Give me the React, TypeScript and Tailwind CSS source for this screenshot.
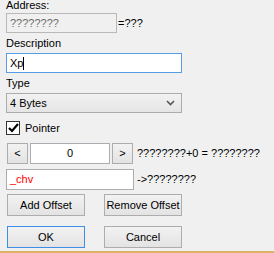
const font = "font-['Liberation_Sans',Arial,sans-serif] text-[11px]";

const Btn = ({ label, focused }: { label: string; focused?: boolean }) => (
  <button
    className={`w-[78px] h-[22px] border bg-gradient-to-b from-[#f2f2f2] to-[#e3e3e3] text-black leading-none ${
      focused ? "border-[#3d8ee6]" : "border-[#adadad]"
    }`}
  >
    {label}
  </button>
);

const Arrow = ({ label }: { label: string }) => (
  <button className="w-[21px] h-[21px] border border-[#adadad] bg-gradient-to-b from-[#f2f2f2] to-[#e3e3e3] text-black leading-none">
    {label}
  </button>
);

export default function App() {
  return (
    <div className={`w-[274px] h-[253px] bg-[#f0f0f0] overflow-hidden flex flex-col pl-[6px] text-black ${font}`}>
      {/* Address */}
      <div className="h-[13px] leading-[13px] mt-[-1px]">Address:</div>
      <div className="flex items-center mt-[1px]">
        <div className="w-[111px] h-[20px] border border-[#b9b9b9] bg-[#f0f0f0] text-[#6d6d6d] pl-[3px] leading-[18px]">
          ????????
        </div>
        <span className="ml-[1px]">=???</span>
      </div>

      {/* Description */}
      <div className="h-[13px] leading-[13px] mt-[4px]">Description</div>
      <div className="w-[176px] h-[20px] border border-[#569de5] bg-white mt-[3px] pl-[3px] leading-[18px] flex items-center">
        Xp<span className="inline-block w-px h-[13px] bg-black"></span>
      </div>

      {/* Type */}
      <div className="h-[13px] leading-[13px] mt-[4px]">Type</div>
      <div className="w-[176px] h-[20px] border border-[#acacac] bg-gradient-to-b from-[#f2f2f2] to-[#e5e5e5] mt-[3px] pl-[3px] flex items-center justify-between">
        <span>4 Bytes</span>
        <svg width="9" height="6" viewBox="0 0 9 6" className="mr-[6px]">
          <path d="M1 1 L4.5 4.5 L8 1" stroke="#555" strokeWidth="1.6" fill="none" />
        </svg>
      </div>

      {/* Pointer */}
      <div className="flex items-center mt-[8px] h-[14px]">
        <div className="w-[14px] h-[14px] border border-[#333] bg-white flex items-center justify-center">
          <svg width="11" height="10" viewBox="0 0 11 10">
            <path d="M1 5 L4 8 L10 1" stroke="#000" strokeWidth="2.2" fill="none" />
          </svg>
        </div>
        <span className="ml-[5px]">Pointer</span>
      </div>

      {/* Offset */}
      <div className="flex items-center mt-[8px] h-[21px]">
        <div className="ml-[1px]">
          <Arrow label="<" />
        </div>
        <div className="ml-[2px] w-[80px] h-[21px] border border-[#abadb3] bg-white flex items-center justify-center">0</div>
        <div className="ml-[2px]">
          <Arrow label=">" />
        </div>
        <span className="ml-[4px]">????????+0 = ????????</span>
      </div>

      <div className="flex items-center mt-[5px]">
        <div className="w-[128px] h-[21px] border border-[#abadb3] bg-white text-[#ff0000] pl-[3px] flex items-center">_chv</div>
        <span className="ml-[3px]">-&gt;????????</span>
      </div>

      {/* Buttons */}
      <div className="flex gap-[19px] ml-[1px] mt-[4px]">
        <Btn label="Add Offset" />
        <Btn label="Remove Offset" />
      </div>
      <div className="flex gap-[19px] ml-[1px] mt-[10px]">
        <Btn label="OK" focused />
        <Btn label="Cancel" />
      </div>

      <div className="mt-auto -ml-[6px] h-[2px] w-[274px] bg-[#dcb364]"></div>
    </div>
  );
}
